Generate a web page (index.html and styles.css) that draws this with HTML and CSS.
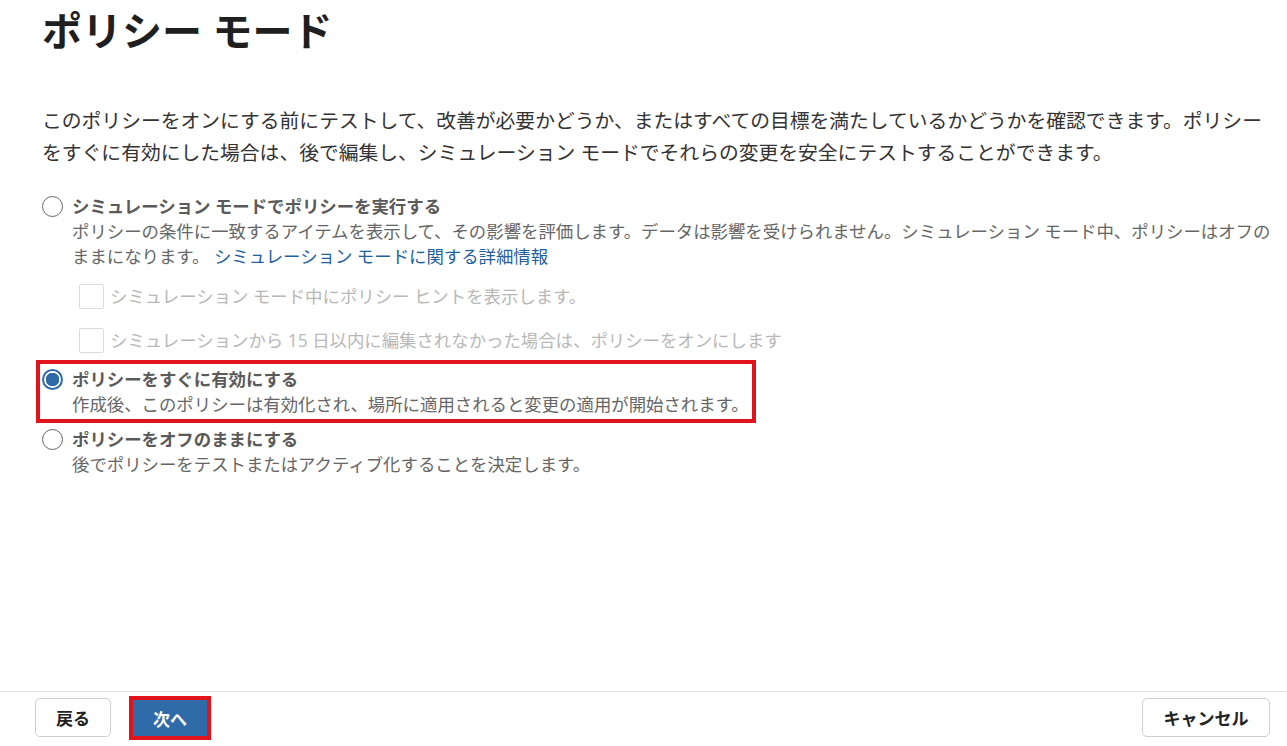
FILE: index.html
```html
<!DOCTYPE html>
<html lang="ja">
<head>
<meta charset="utf-8">
<title>ポリシー モード</title>
<link rel="stylesheet" href="styles.css">
</head>
<body>
<div class="page">
  <main class="content">
    <h1 class="title">ポリシー モード</h1>
    <p class="intro">このポリシーをオンにする前にテストして、改善が必要かどうか、またはすべての目標を満たしているかどうかを確認できます。ポリシーをすぐに有効にした場合は、後で編集し、シミュレーション モードでそれらの変更を安全にテストすることができます。</p>

    <div class="options">
      <div class="option">
        <div class="option-head">
          <span class="radio"></span>
          <span class="option-label">シミュレーション モードでポリシーを実行する</span>
        </div>
        <div class="option-desc">ポリシーの条件に一致するアイテムを表示して、その影響を評価します。データは影響を受けられません。シミュレーション モード中、ポリシーはオフのままになります。 <a class="link" href="#">シミュレーション モードに関する詳細情報</a></div>
        <div class="checks">
          <div class="check-row"><span class="checkbox"></span><span class="check-label">シミュレーション モード中にポリシー ヒントを表示します。</span></div>
          <div class="check-row"><span class="checkbox"></span><span class="check-label">シミュレーションから 15 日以内に編集されなかった場合は、ポリシーをオンにします</span></div>
        </div>
      </div>

      <div class="option option-highlight">
        <div class="option-head">
          <span class="radio radio-checked"></span>
          <span class="option-label">ポリシーをすぐに有効にする</span>
        </div>
        <div class="option-desc">作成後、このポリシーは有効化され、場所に適用されると変更の適用が開始されます。</div>
      </div>

      <div class="option">
        <div class="option-head">
          <span class="radio"></span>
          <span class="option-label">ポリシーをオフのままにする</span>
        </div>
        <div class="option-desc">後でポリシーをテストまたはアクティブ化することを決定します。</div>
      </div>
    </div>
  </main>

  <footer class="footer">
    <div class="footer-left">
      <button class="btn btn-back">戻る</button>
      <span class="btn-highlight"><button class="btn btn-primary">次へ</button></span>
    </div>
    <button class="btn btn-cancel">キャンセル</button>
  </footer>
</div>
</body>
</html>
```

FILE: styles.css
```css
* {
  box-sizing: border-box;
}

html, body {
  margin: 0;
  padding: 0;
  background: #ffffff;
}

body {
  font-family: "Open Sans", "Noto Sans CJK JP", sans-serif;
  color: #333333;
}

.page {
  width: 1287px;
  height: 746px;
  display: flex;
  flex-direction: column;
}

.content {
  flex: 1;
  padding: 8px 4px 0 42px;
}

.title {
  margin: 0;
  font-size: 40px;
  line-height: 46px;
  font-weight: 700;
  color: #1f1f1f;
}

.intro {
  margin: 51px 3px 0 0;
  font-size: 19.8px;
  line-height: 32px;
  color: #333333;
}

.options {
  margin-top: 21px;
  margin-left: -6px;
  display: flex;
  flex-direction: column;
}

.option {
  border: 4px solid transparent;
  padding: 0 0 0 2px;
  font-size: 17.4px;
  line-height: 25px;
}

.option-highlight {
  align-self: flex-start;
  border-color: #e3131b;
  padding: 3px 3px 2px 2px;
}

.option-head {
  display: flex;
  align-items: center;
  gap: 9px;
}

.radio {
  width: 21px;
  height: 21px;
  border-radius: 50%;
  border: 1.5px solid #666666;
  background: #ffffff;
  flex: none;
}

.radio-checked {
  border: 2px solid #2f6aa9;
  background: radial-gradient(circle, #2f6aa9 0 6.5px, #ffffff 7px);
}

.option-label {
  font-weight: 700;
  color: #5a5a5a;
}

.option-desc {
  padding-left: 30px;
  color: #666666;
}

.link {
  color: #1f5f9e;
  text-decoration: none;
}

.checks {
  margin-top: 15px;
  padding-left: 37px;
  display: flex;
  flex-direction: column;
  gap: 19px;
  margin-bottom: 3px;
}

.check-row {
  display: flex;
  align-items: center;
  gap: 6px;
}

.checkbox {
  width: 25px;
  height: 25px;
  border: 1px solid #dcdcdc;
  border-radius: 2px;
  flex: none;
}

.check-label {
  color: #b8b8b8;
}

.footer {
  height: 55px;
  border-top: 1px solid #e1e1e1;
  display: flex;
  justify-content: space-between;
  align-items: flex-start;
  padding: 6px 17px 0 35px;
}

.footer-left {
  display: flex;
  align-items: flex-start;
  gap: 18px;
}

.btn {
  font-family: "Open Sans", "Noto Sans CJK JP", sans-serif;
  font-size: 17px;
  font-weight: 700;
  color: #222222;
  background: #ffffff;
  border: 1px solid #cfcfcf;
  border-radius: 5px;
  height: 39px;
  padding: 0;
  cursor: pointer;
}

.btn-back {
  width: 76px;
}

.btn-cancel {
  width: 128px;
}

.btn-highlight {
  display: inline-block;
  border: 4px solid #e3131b;
  margin-top: -2px;
  line-height: 0;
}

.btn-primary {
  background: #2f6aa9;
  color: #ffffff;
  border: none;
  border-radius: 0;
  height: 36px;
  width: 74px;
}
```
